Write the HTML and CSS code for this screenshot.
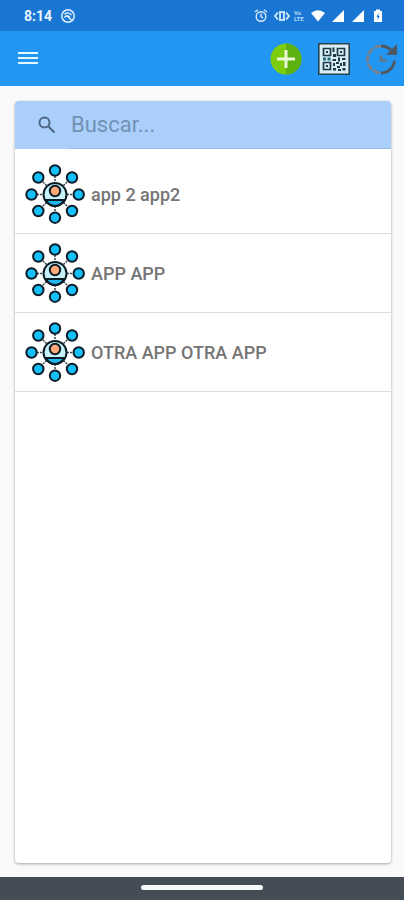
FILE: index.html
```
<!DOCTYPE html>
<html lang="es">
<head>
<meta charset="utf-8">
<meta name="viewport" content="width=device-width, initial-scale=1">
<title>Apps</title>
<link rel="stylesheet" href="styles.css">
</head>
<body>
<svg class="defs" aria-hidden="true">
  <symbol id="network" viewBox="0 0 60 60">
    <path d="M30 12v6M30 42v6M12 30.500h6M42 30.500h6M18 18l4 4M42 18l-4 4M18 42l4-4M42 42l-4-4" stroke="#37474f" stroke-width="1.500" stroke-dasharray="2 1"/>
    <circle cx="30" cy="30.500" r="11.500" fill="#c5f2f8" stroke="#0c1c26" stroke-width="2"/>
    <path d="M21 36h18Q36 42 30 42Q24 42 21 36z" fill="#20b8f0" stroke="#0c1c26" stroke-width="2"/>
    <circle cx="30" cy="27" r="5.200" fill="#ffa878" stroke="#0c1c26" stroke-width="2"/>
    <g fill="#14c0fa" stroke="#0c1c26" stroke-width="2">
      <circle cx="30" cy="6.500" r="5.200"/><circle cx="47" cy="13.500" r="5.200"/>
      <circle cx="53.700" cy="30.500" r="5.200"/><circle cx="47" cy="47" r="5.200"/>
      <circle cx="30" cy="53.700" r="5.200"/><circle cx="13.300" cy="47" r="5.200"/>
      <circle cx="6.500" cy="30.500" r="5.200"/><circle cx="13.300" cy="13.500" r="5.200"/>
    </g>
  </symbol>
  <symbol id="signal" viewBox="0 0 16 16"><path d="M2 14L14 2v12z" fill="#fff"/></symbol>
</svg>

<div class="status">
  <span class="clock">8:14</span>
  <svg class="notice" viewBox="0 0 16 16" fill="none" stroke="#e3f2fd"><circle cx="8" cy="8" r="6.200" stroke-width="1.500"/><path d="M4.500 6.500Q8 3 11.500 7M4.500 9.500Q7 6 10 9.500M7 8l4.500 4" stroke-width="1.500"/></svg>
  <div class="indicators">
    <svg class="alarm" viewBox="0 0 18 16" fill="none" stroke="#d6eafc" stroke-width="1.400"><circle cx="9" cy="8.500" r="4.800"/><path d="M9 5.500v3.200l2 1.200M3 4l3-2.300M15 4l-3-2.300"/></svg>
    <svg class="glyph" viewBox="0 0 16 16"><path d="M5 3h6v10H5z" fill="#bbdefb"/><path d="M7 5h2v6H7z" fill="#1976d2"/><path d="M4 4.500L1 8l3 3.500M12 4.500L15 8l-3 3.500" fill="none" stroke="#d6eafc" stroke-width="1.800"/></svg>
    <span class="volte">Vo<br>LTE</span>
    <svg class="glyph" viewBox="0 0 16 16"><path d="M1 5Q8-.5 15 5L8 13.500z" fill="#fff"/></svg>
    <svg class="glyph"><use href="#signal"/></svg>
    <svg class="glyph"><use href="#signal"/></svg>
    <svg class="glyph" viewBox="0 0 16 16"><path d="M6 1.500h4V3h2v11H4V3h2z" fill="#fff"/><path d="M8.500 5L6.500 9h1.200v3l2-4H8.500z" fill="#1976d2"/></svg>
  </div>
</div>

<header class="appbar">
  <button class="icon-btn menu" aria-label="Menú"><svg viewBox="0 0 20 20"><path d="M0 4h20M0 9h20M0 14h20" stroke="#e3f8ff" stroke-width="2"/></svg></button>
  <button class="icon-btn" aria-label="Añadir"><svg viewBox="0 0 32 32"><circle cx="16" cy="16" r="15.500" fill="#7ccc10"/><path d="M16 .5a15.500 15.500 0 0 1 0 31z" fill="#5cb010"/><path d="M16 7v18M7 16h18" stroke="#eaf8d8" stroke-width="3"/></svg></button>
  <button class="icon-btn" aria-label="Código QR"><svg viewBox="0 0 32 32">
    <path d="M.8.8h30.400v30.400H.8z" fill="#d9edf5" stroke="#26424f" stroke-width="1.600"/>
    <g fill="none" stroke="#1d3a47" stroke-width="1.700"><path d="M5.500 5.500h7v7h-7zM19.500 5.500h7v7h-7zM5.500 19.500h7v7h-7z"/></g>
    <path d="M8 8h2v2H8zM22 8h2v2h-2zM8 22h2v2H8zM14.500 4.500h2V9h-2zM15 11h3v3h-3zM14.500 16H18v2h-3.500zM20 14.500h2v4h-2zM24 15h3.500v2H24zM15 20h2v3h-2zM18 19h3v2h-3zM22 20h2v3h-2zM25 19h2.500v4H25zM15 25h3v2.500h-3zM19 23h3v2h-3zM20 26h3v2h-3zM24.500 25h3v2.500h-3z" fill="#1d3a47"/>
    <path d="M5 14.500h3v3H5zM9.500 14.500h3v3h-3z" fill="#1c6a78"/></svg></button>
  <button class="icon-btn" aria-label="Actualizar"><svg viewBox="0 0 32 32" fill="none"><path d="M15 3A13.500 13.500 0 0 0 15 30" stroke="#78838e" stroke-width="3" stroke-dasharray="7 1.500"/><path d="M15 30A13.500 13.500 0 0 0 28.500 17.500M15 3Q21 3 25.500 7.500" stroke="#4f5963" stroke-width="3"/><path d="M31 1V12H20z" fill="#4f5963"/><path d="M15 12V17.500h6" stroke="#68747f" stroke-width="2.500"/></svg></button>
</header>

<main class="content">
  <section class="card">
    <label class="search">
      <svg viewBox="0 0 20 20" fill="none" stroke="#4d6684" stroke-width="2"><circle cx="7.500" cy="7.500" r="5"/><path d="M11.200 11.200l6.300 6.300"/></svg>
      <input type="text" placeholder="Buscar..." aria-label="Buscar">
    </label>
    <ul class="apps">
      <li><svg><use href="#network"/></svg><span>app 2 app2</span></li>
      <li><svg><use href="#network"/></svg><span>APP APP</span></li>
      <li><svg><use href="#network"/></svg><span>OTRA APP OTRA APP</span></li>
    </ul>
  </section>
</main>
<footer class="navbar"><div class="pill"></div></footer>
</body>
</html>
```
FILE: styles.css
```
* { box-sizing: border-box; }
body {
  margin: 0;
  min-height: 100vh;
  display: flex;
  flex-direction: column;
  background: #fafafa;
  font-family: Roboto, "Liberation Sans", sans-serif;
}
svg { display: block; flex: none; }
.defs { position: absolute; width: 0; height: 0; }

.status {
  display: flex;
  align-items: center;
  height: 31px;
  padding: 0 18px 0 24px;
  background: #1976d2;
  color: #e8f5ff;
}
.clock { font-size: 14px; font-weight: 700; }
.notice { width: 16px; height: 16px; margin-left: 8px; }
.indicators { display: flex; align-items: center; gap: 4px; margin-left: auto; }
.alarm { width: 18px; height: 16px; }
.glyph { width: 16px; height: 16px; }
.volte { width: 12px; font-size: 6px; line-height: 6px; font-weight: 700; color: #bbdefb; }

.appbar {
  display: flex;
  align-items: center;
  gap: 16px;
  height: 55px;
  padding: 0 6px 0 18px;
  background: #2196f3;
}
.icon-btn { width: 32px; height: 32px; padding: 0; border: 0; background: none; }
.menu { width: 20px; height: 20px; margin-right: auto; }
.icon-btn svg { width: 100%; height: 100%; }

.content { flex: 1; display: flex; padding: 15px 13px 14px 15px; }
.card {
  flex: 1;
  min-width: 0;
  border-radius: 4px;
  overflow: hidden;
  background: #fff;
  box-shadow: 0 1px 3px rgba(0, 0, 0, 0.35);
}
.search {
  display: flex;
  align-items: center;
  gap: 13px;
  height: 48px;
  padding-left: 22px;
  background: #aacffa;
}
.search svg { width: 20px; height: 20px; }
.search input {
  flex: 1;
  min-width: 0;
  height: 48px;
  padding: 1px;
  border: 0;
  border-bottom: 1px solid #98bde8;
  outline: 0;
  background: none;
  font: 22px Roboto, "Liberation Sans", sans-serif;
}
.search input::placeholder { color: #7191b5; opacity: 1; }

.apps { margin: 0; padding: 6px 0 0; list-style: none; }
.apps li {
  display: flex;
  align-items: center;
  gap: 6px;
  min-height: 79px;
  padding-left: 10px;
  border-bottom: 1px solid #dedede;
  color: #757575;
  font-size: 18px;
  font-weight: 500;
}
.apps svg { width: 60px; height: 60px; }

.navbar {
  display: flex;
  justify-content: center;
  height: 23px;
  padding-top: 8px;
  background: #444c55;
}
.pill { width: 30%; height: 5px; border-radius: 3px; background: #f5f8fa; }
```
